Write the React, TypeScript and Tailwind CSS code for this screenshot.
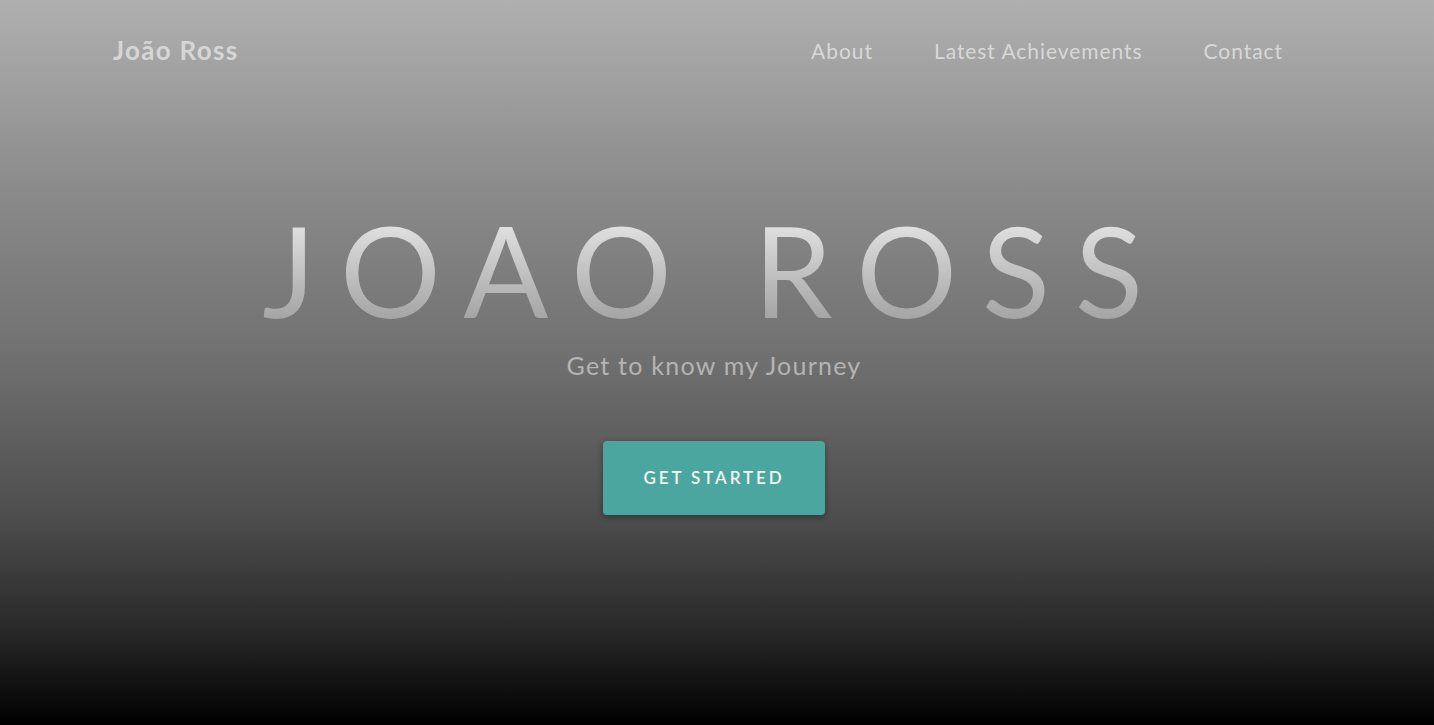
export default function App() {
  const links = ["About", "Latest Achievements", "Contact"];

  return (
    <div className="flex h-[725px] w-full flex-col bg-[linear-gradient(to_bottom,#b0b0b0_0%,#8c8c8c_25%,#6f6f6f_50%,#4c4c4c_72%,#282828_87%,#000000_100%)] font-['Lato','Open_Sans',sans-serif]">
      {/* Navbar */}
      <nav className="flex items-center justify-between pl-[113px] pr-[151px] pt-[31px]">
        <span className="text-[26px] font-bold tracking-[0.05em] text-[#d6d6d6]">João Ross</span>
        <ul className="flex gap-[61px]">
          {links.map((l) => (
            <li key={l} className="text-[21px] tracking-[0.045em] text-[#d8d8d8]">
              {l}
            </li>
          ))}
        </ul>
      </nav>

      {/* Hero */}
      <section className="flex flex-col items-center pt-[137px]">
        <h1 className="mr-[4px] bg-linear-to-b from-[#ececec] to-[#9c9c9c] bg-clip-text text-[126px] leading-[1] tracking-[0.196em] text-transparent">
          JOAO ROSS
        </h1>
        <p className="mr-[6px] mt-[14px] text-[25px] tracking-[0.05em] text-[#b4b4b4]">Get to know my Journey</p>
        <button className="mr-[6px] mt-[56px] h-[74px] w-[222px] rounded-[4px] bg-[#4ca6a0] text-[17px] font-semibold tracking-[0.17em] text-[#f4f4f4] shadow-[0_2px_6px_rgba(0,0,0,0.35)]">
          GET STARTED
        </button>
      </section>
    </div>
  );
}
